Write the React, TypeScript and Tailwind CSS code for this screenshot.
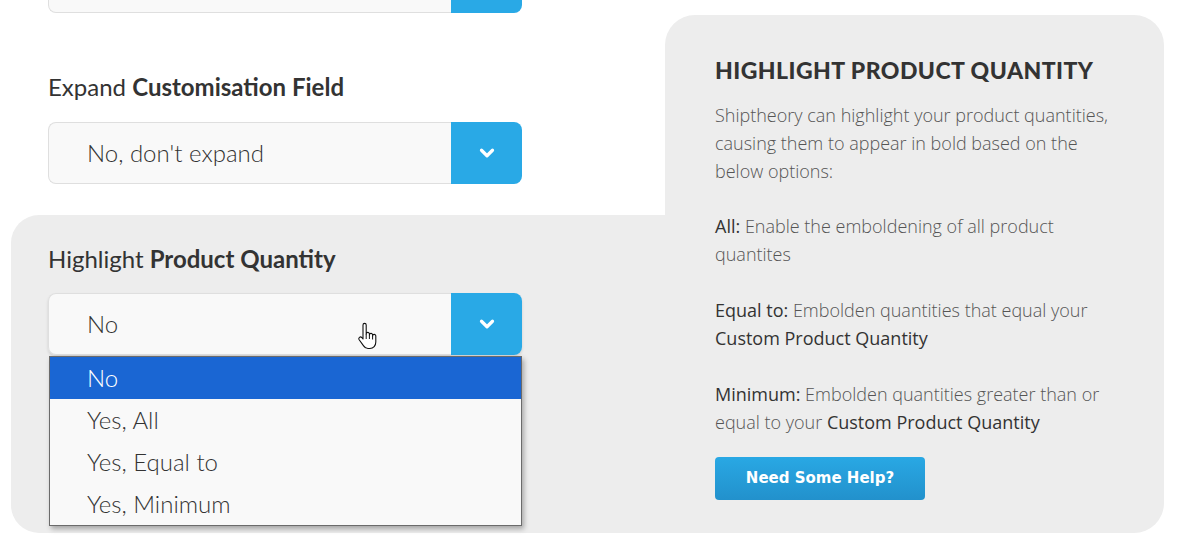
import { ChevronDown } from 'lucide-react'

const body = { fontFamily: 'Lato, "Open Sans", sans-serif' }
const para = { fontFamily: '"Open Sans", Lato, sans-serif' }

function SelectBox({ value, shadow = false }: { value?: string; shadow?: boolean }) {
  return (
    <div className={`flex h-[62px] w-[474px] ${shadow ? 'shadow-[0_2px_3px_rgba(0,0,0,0.12)] rounded-lg' : ''}`}>
      <div className="flex flex-1 items-center rounded-l-lg border-y border-l border-[#dfdfdf] bg-[#f9f9f9] pl-[38px] text-[24px] font-light text-[#333]">
        {value}
      </div>
      <div className="flex w-[71px] items-center justify-center rounded-r-lg bg-[#29a9e6]">
        <ChevronDown className="h-[22px] w-[22px] text-white" strokeWidth={3.5} />
      </div>
    </div>
  )
}

function HandCursor() {
  return (
    <svg
      className="absolute left-[357px] top-[322px]"
      width="20"
      height="28"
      viewBox="0 0 20 28"
    >
      <path
        d="M6 3a1.6 1.6 0 0 1 3.2 0V12a1.6 1.6 0 0 1 3.2 0v1a1.6 1.6 0 0 1 3.2 0v1a1.6 1.6 0 0 1 3.2 0V20c0 3.5-2.3 6.5-6 6.5H11c-2.2 0-3.4-1-4.4-2.6L2 17.5a1.7 1.7 0 0 1 2.7-2L6 17Z"
        fill="white"
        stroke="#111"
        strokeWidth="1.1"
        strokeLinejoin="round"
      />
      <path d="M9.2 12v5M12.4 13v4M15.6 14v3.5" stroke="#111" strokeWidth="1" />
    </svg>
  )
}

const options = ['No', 'Yes, All', 'Yes, Equal to', 'Yes, Minimum']

export default function App() {
  return (
    <div className="relative h-[550px] w-[1183px] overflow-hidden bg-white text-[#333]" style={body}>
      <div className="flex h-[533px] pl-[11px]">
        {/* Left column */}
        <div className="flex w-[654px] flex-col">
          <div className="h-[215px] pl-[37px]">
            <div className="mt-[-49px]">
              <SelectBox />
            </div>
            <div className="mt-[59px] h-[30px] text-[24px] leading-[30px]">
              Expand <span className="font-bold">Customisation Field</span>
            </div>
            <div className="mt-[20px]">
              <SelectBox value="No, don't expand" />
            </div>
          </div>
          <div className="flex-1 rounded-l-[28px] bg-[#ededed] pl-[37px] pt-[29px]">
            <div className="h-[30px] text-[24px] leading-[30px]">
              Highlight <span className="font-bold">Product Quantity</span>
            </div>
            <div className="mt-[19px]">
              <SelectBox value="No" shadow />
            </div>
          </div>
        </div>

        {/* Right column */}
        <div className="mt-[15px] w-[499px] rounded-t-[30px] rounded-br-[30px] bg-[#ededed] pl-[50px] pt-[40px]">
          <h2 className="h-[30px] text-[23px] font-black leading-[30px] tracking-[0.45px] text-[#333]">
            HIGHLIGHT PRODUCT QUANTITY
          </h2>
          <div className="mt-[16px] w-[402px] text-[18px] font-light leading-[28px] text-[#555]" style={para}>
            <p>
              Shiptheory can highlight your product quantities, causing them to appear in bold based on the below
              options:
            </p>
            <p className="mt-[27px]">
              <span className="font-normal text-[#333]">All:</span> Enable the emboldening of all product quantites
            </p>
            <p className="mt-[28px]">
              <span className="font-normal text-[#333]">Equal to:</span> Embolden quantities that equal your{' '}
              <span className="font-normal text-[#333]">Custom Product Quantity</span>
            </p>
            <p className="mt-[28px]">
              <span className="font-normal text-[#333]">Minimum:</span> Embolden quantities greater than or equal to
              your <span className="font-normal text-[#333]">Custom Product Quantity</span>
            </p>
          </div>
          <button
            className="mt-[21px] h-[43px] w-[210px] rounded-[4px] bg-gradient-to-b from-[#29a8e4] to-[#2291cc] text-[15px] font-bold text-white"
            style={{ fontFamily: '"DejaVu Sans", Verdana, sans-serif' }}
          >
            Need Some Help?
          </button>
        </div>
      </div>

      {/* Open dropdown list */}
      <ul className="absolute left-[49px] top-[356px] w-[473px] border border-[#6b6b6b] bg-[#f9f9f9] shadow-[2px_3px_5px_rgba(0,0,0,0.3)]">
        {options.map((opt, i) => (
          <li
            key={opt}
            className={`flex h-[42px] items-center pl-[37px] text-[24px] font-light ${
              i === 0 ? 'bg-[#1a66d3] text-white' : 'text-[#333]'
            }`}
          >
            {opt}
          </li>
        ))}
      </ul>

      <HandCursor />
    </div>
  )
}
